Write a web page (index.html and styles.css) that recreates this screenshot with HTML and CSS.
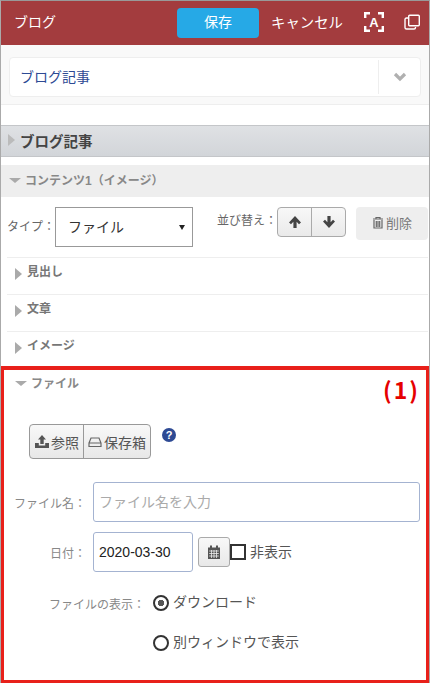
FILE: index.html
```html
<!DOCTYPE html>
<html lang="ja">
<head>
	<meta charset="UTF-8">
	<title>ブログ</title>
	<link rel="stylesheet" href="styles.css">
</head>
<body>
<div class="page">
	<div class="topbar">
		<span class="topbar-title">ブログ</span>
		<a class="btn-save">保存</a>
		<span class="btn-cancel">キャンセル</span>
		<svg class="icon-font" width="20" height="20" viewBox="0 0 20 20">
			<path d="M1.200 6V1.200H6M14 1.200H18.800V6M18.800 14V18.800H14M6 18.800H1.200V14" fill="none" stroke="#fff" stroke-width="2.400"/>
			<text x="10" y="15" text-anchor="middle" class="icon-letter">A</text>
		</svg>
		<svg class="icon-copy" width="16" height="16" viewBox="0 0 16 16">
			<rect x="4.700" y="1.200" width="10.600" height="10.600" rx="1" fill="none" stroke="#fff" stroke-width="1.400"/>
			<path d="M4 4H2.500Q1 4 1 5.500V13.500Q1 15 2.500 15H10Q11.500 15 11.500 13.500V13" fill="none" stroke="#fff" stroke-width="1.400"/>
		</svg>
	</div>

	<div class="picker-wrap">
		<div class="picker">
			<span class="picker-text">ブログ記事</span>
			<span class="picker-arrow">
				<svg width="14" height="10" viewBox="0 0 14 10"><path d="M2 2L7 7L12 2" fill="none" stroke="#b0b0b0" stroke-width="3.200"/></svg>
			</span>
		</div>
	</div>

	<div class="section-bar"><i class="tri-right tri-light"></i>ブログ記事</div>

	<div class="content-head"><i class="tri-down"></i>コンテンツ1（イメージ）</div>

	<div class="type-row">
		<label class="type-label">タイプ：</label>
		<span class="select-wrap">
			<select class="type-select"><option>ファイル</option></select>
			<i class="select-arrow"></i>
		</span>
		<span class="sort-label">並び替え：</span>
		<div class="sort-btns">
			<a class="sort-btn">
				<svg width="14" height="14" viewBox="0 0 14 14"><path d="M7 1L13 7.500L11 9.300L8.600 6.800V13H5.400V6.800L3 9.300L1 7.500Z" fill="#444"/></svg>
			</a>
			<a class="sort-btn">
				<svg width="14" height="14" viewBox="0 0 14 14"><path d="M7 13L13 6.500L11 4.700L8.600 7.200V1H5.400V7.200L3 4.700L1 6.500Z" fill="#444"/></svg>
			</a>
		</div>
		<a class="btn-delete">
			<svg width="12" height="13" viewBox="0 0 12 13"><path d="M1 3H11M4 3V1.500H8V3M2 4V12H10V4M4.300 5V11M6 5V11M7.700 5V11" fill="none" stroke="#666" stroke-width="1.200"/></svg><span>削除</span>
		</a>
	</div>

	<div class="fold"><i class="tri-right"></i>見出し</div>
	<div class="fold"><i class="tri-right"></i>文章</div>
	<div class="fold fold-last"><i class="tri-right"></i>イメージ</div>

	<div class="file-box">
		<span class="note">(1)</span>
		<div class="file-head"><i class="tri-down"></i>ファイル</div>

		<div class="file-btns">
			<div class="btn-group">
				<a class="file-btn">
					<svg width="14" height="13" viewBox="0 0 14 13"><path d="M7 0L11 4.500H8.700V9H5.300V4.500H3ZM0 8H3.800V10.500H10.200V8H14V13H0Z" fill="#555"/></svg>参照
				</a>
				<a class="file-btn">
					<svg width="14" height="12" viewBox="0 0 14 12"><path d="M1 7L3 2H11L13 7V10.500H1ZM1 7H13" fill="none" stroke="#666" stroke-width="1.200"/></svg>保存箱
				</a>
			</div>
			<svg class="help" width="14" height="14" viewBox="0 0 14 14">
				<circle cx="7" cy="7" r="7" fill="#2d4a94"/>
				<text x="7" y="11" text-anchor="middle" class="help-mark">?</text>
			</svg>
		</div>

		<div class="form-row name-row">
			<label class="form-label">ファイル名：</label>
			<input class="text-input name-input" placeholder="ファイル名を入力">
		</div>

		<div class="form-row date-row">
			<label class="form-label">日付：</label>
			<input class="text-input date-input" value="2020-03-30">
			<a class="cal-btn">
				<svg width="14" height="14" viewBox="0 0 14 14"><path d="M1 2.500H13V14H1Z" fill="#555"/><path d="M3 0.500H5V4H3ZM9 0.500H11V4H9Z" fill="#555"/><path d="M2.200 6H11.800M2.200 8.500H11.800M2.200 11H11.800M4.500 5V13M7 5V13M9.500 5V13" stroke="#eee" stroke-width="0.800"/></svg>
			</a>
			<input type="checkbox" class="check">
			<span class="check-text">非表示</span>
		</div>

		<div class="form-row radio-row">
			<label class="form-label radio-label">ファイルの表示：</label>
			<input type="radio" name="disp" class="radio" checked>
			<span class="radio-text">ダウンロード</span>
		</div>
		<div class="form-row radio-row2">
			<input type="radio" name="disp" class="radio">
			<span class="radio-text">別ウィンドウで表示</span>
		</div>
	</div>
</div>
</body>
</html>
```

FILE: styles.css
```css
*
{
    box-sizing: border-box;
    margin: 0;
    padding: 0;
}
body
{
    font-family: "Liberation Sans", "Noto Sans CJK JP", sans-serif;
    font-size: 14px;
    color: #333;
    background: #fff;
}
.page
{
    width: 430px;
    height: 683px;
    overflow: hidden;
    border-top: 1px solid #999;
    border-left: 1px solid #aaa;
    border-right: 1px solid #aaa;
}

/* top bar */
.topbar
{
    display: flex;
    align-items: center;
    height: 44px;
    background: #a33c3e;
    color: #fff;
}
.topbar-title
{
    width: 176px;
    padding: 0 0 5px 13px;
    font-size: 14px;
}
.btn-save
{
    width: 82px;
    height: 30px;
    line-height: 28px;
    text-align: center;
    border-radius: 4px;
    background: #26a9e6;
    font-size: 14px;
}
.btn-cancel
{
    margin-left: 12px;
    padding-bottom: 4px;
    font-size: 14.400px;
}
.icon-font
{
    margin: 0 0 2px 21px;
}
.icon-letter
{
    font-size: 13px;
    font-weight: bold;
    fill: #fff;
}
.icon-copy
{
    margin: 0 0 2px 20px;
}

/* page picker */
.picker-wrap
{
    height: 60px;
    padding: 12px 8px 0;
    background: #f9f9f9;
    border-bottom: 1px solid #eee;
}
.picker
{
    display: flex;
    align-items: center;
    height: 40px;
    background: #fff;
    border: 1px solid #eee;
    border-radius: 4px;
}
.picker-text
{
    flex: 1;
    padding: 0 0 3px 10px;
    font-size: 14px;
    color: #2d4a94;
}
.picker-arrow
{
    display: flex;
    align-items: center;
    justify-content: center;
    width: 42px;
    height: 34px;
    border-left: 1px solid #eee;
}

/* section headings */
.section-bar
{
    display: flex;
    align-items: center;
    height: 32px;
    margin-top: 20px;
    padding: 0 0 2px 7px;
    font-size: 14.500px;
    font-weight: bold;
    color: #444;
    background: linear-gradient(#dfe1e4, #d2d5d9);
    border-top: 1px solid #c4c6c9;
    border-bottom: 1px solid #c4c6c9;
}
.content-head
{
    display: flex;
    align-items: center;
    height: 32px;
    margin-top: 8px;
    padding: 0 0 3px 8px;
    font-size: 12px;
    font-weight: bold;
    color: #888;
    background: #eee;
}
.tri-right
{
    display: inline-block;
    margin-right: 5px;
    border-left: 7px solid #aaa;
    border-top: 6px solid transparent;
    border-bottom: 6px solid transparent;
}
.tri-light
{
    border-left-color: #bbb;
}
.tri-down
{
    display: inline-block;
    margin: 2px 4px 0 0;
    border-top: 5px solid #aaa;
    border-left: 6px solid transparent;
    border-right: 6px solid transparent;
}

/* type row */
.type-row
{
    display: flex;
    align-items: flex-start;
    height: 61px;
    margin: 0 1px 0 6px;
    padding-top: 10px;
    border-bottom: 1px solid #eee;
}
.type-label
{
    width: 48px;
    padding-top: 10px;
    font-size: 12px;
    color: #666;
}
.select-wrap
{
    position: relative;
    display: block;
    width: 138px;
    height: 40px;
}
.type-select
{
    appearance: none;
    width: 100%;
    height: 100%;
    padding-left: 12px;
    font-family: inherit;
    font-size: 14px;
    color: #333;
    background: #fff;
    border: 1px solid #999;
    border-radius: 0;
}
.select-arrow
{
    position: absolute;
    top: 18px;
    right: 8px;
    border-top: 5px solid #222;
    border-left: 3px solid transparent;
    border-right: 3px solid transparent;
}
.sort-label
{
    width: 60px;
    margin-left: 24px;
    padding-top: 4px;
    font-size: 12px;
    color: #666;
}
.sort-btns
{
    display: flex;
    width: 69px;
    height: 30px;
    border: 1px solid #aaa;
    border-radius: 4px;
    background: linear-gradient(#f8f8f8, #eaeaea);
}
.sort-btn
{
    display: flex;
    flex: 1;
    align-items: center;
    justify-content: center;
}
.sort-btn + .sort-btn
{
    border-left: 1px solid #aaa;
}
.btn-delete
{
    display: flex;
    align-items: center;
    justify-content: center;
    gap: 2px;
    width: 72px;
    height: 33px;
    margin-left: 10px;
    padding-bottom: 3px;
    font-size: 13px;
    color: #777;
    background: #eee;
    border-radius: 4px;
}

/* folded rows */
.fold
{
    display: flex;
    align-items: flex-start;
    height: 37px;
    margin: 0 1px 0 6px;
    padding: 4px 0 0 8px;
    font-size: 12px;
    font-weight: bold;
    color: #777;
    border-bottom: 1px solid #eee;
}
.fold .tri-right
{
    margin-top: 6px;
}
.fold-last
{
    height: 34px;
    border-bottom: 0;
}

/* file panel */
.file-box
{
    position: relative;
    height: 318px;
    margin: 0 -1px;
    padding: 0 6px;
    border: 4px solid #e8201a;
}
.note
{
    position: absolute;
    top: 2px;
    right: 6px;
    font-family: "Noto Sans CJK JP", sans-serif;
    font-size: 23px;
    font-weight: bold;
    letter-spacing: 2px;
    color: #e60000;
}
.file-head
{
    display: flex;
    align-items: center;
    height: 24px;
    padding-left: 5px;
    font-size: 12px;
    font-weight: bold;
    color: #888;
}
.file-btns
{
    display: flex;
    align-items: flex-start;
    margin: 30px 0 0 19px;
}
.btn-group
{
    display: flex;
    height: 35px;
    border: 1px solid #999;
    border-radius: 4px;
    background: linear-gradient(#f8f8f8, #e8e8e8);
}
.file-btn
{
    display: flex;
    align-items: center;
    gap: 2px;
    padding: 0 4px;
    font-size: 14px;
    color: #555;
}
.file-btn:first-child
{
    padding-left: 5px;
}
.file-btn + .file-btn
{
    border-left: 1px solid #999;
}
.help
{
    margin: 4px 0 0 11px;
}
.help-mark
{
    font-size: 11px;
    font-weight: bold;
    fill: #fff;
}

/* form rows */
.form-row
{
    display: flex;
    align-items: center;
}
.form-label
{
    width: 76px;
    margin-right: 7px;
    text-align: right;
    font-size: 12px;
    color: #888;
    white-space: nowrap;
}
.text-input
{
    height: 40px;
    padding: 0 5px;
    font-family: inherit;
    font-size: 14px;
    color: #333;
    border: 1px solid #a4b3d1;
    border-radius: 3px;
    outline: none;
}
.text-input::placeholder
{
    color: #aaa;
}
.name-row
{
    margin-top: 23px;
}
.name-input
{
    width: 327px;
}
.date-row
{
    margin-top: 10px;
}
.date-input
{
    width: 100px;
    color: #222;
}
.cal-btn
{
    display: flex;
    align-items: center;
    justify-content: center;
    width: 32px;
    height: 30px;
    margin-left: 5px;
    border: 1px solid #aaa;
    border-radius: 3px;
    background: linear-gradient(#f8f8f8, #e8e8e8);
}
.check
{
    appearance: none;
    width: 16px;
    height: 16px;
    background: #fff;
    border: 2px solid #333;
}
.check-text
{
    margin: 0 0 2px 4px;
    font-size: 14px;
    color: #555;
}
.radio-row
{
    margin-top: 19px;
    height: 24px;
}
.radio-label
{
    width: 135px;
    margin-right: 8px;
}
.radio-row2
{
    height: 24px;
    margin-top: 16px;
    padding-left: 143px;
}
.radio
{
    appearance: none;
    width: 16px;
    height: 16px;
    background: #fff;
    border: 2px solid #333;
    border-radius: 50%;
}
.radio:checked
{
    background: radial-gradient(circle, #555 0 3px, #fff 3.500px);
}
.radio-text
{
    margin: 0 0 4px 4px;
    font-size: 14px;
    color: #555;
}
```
